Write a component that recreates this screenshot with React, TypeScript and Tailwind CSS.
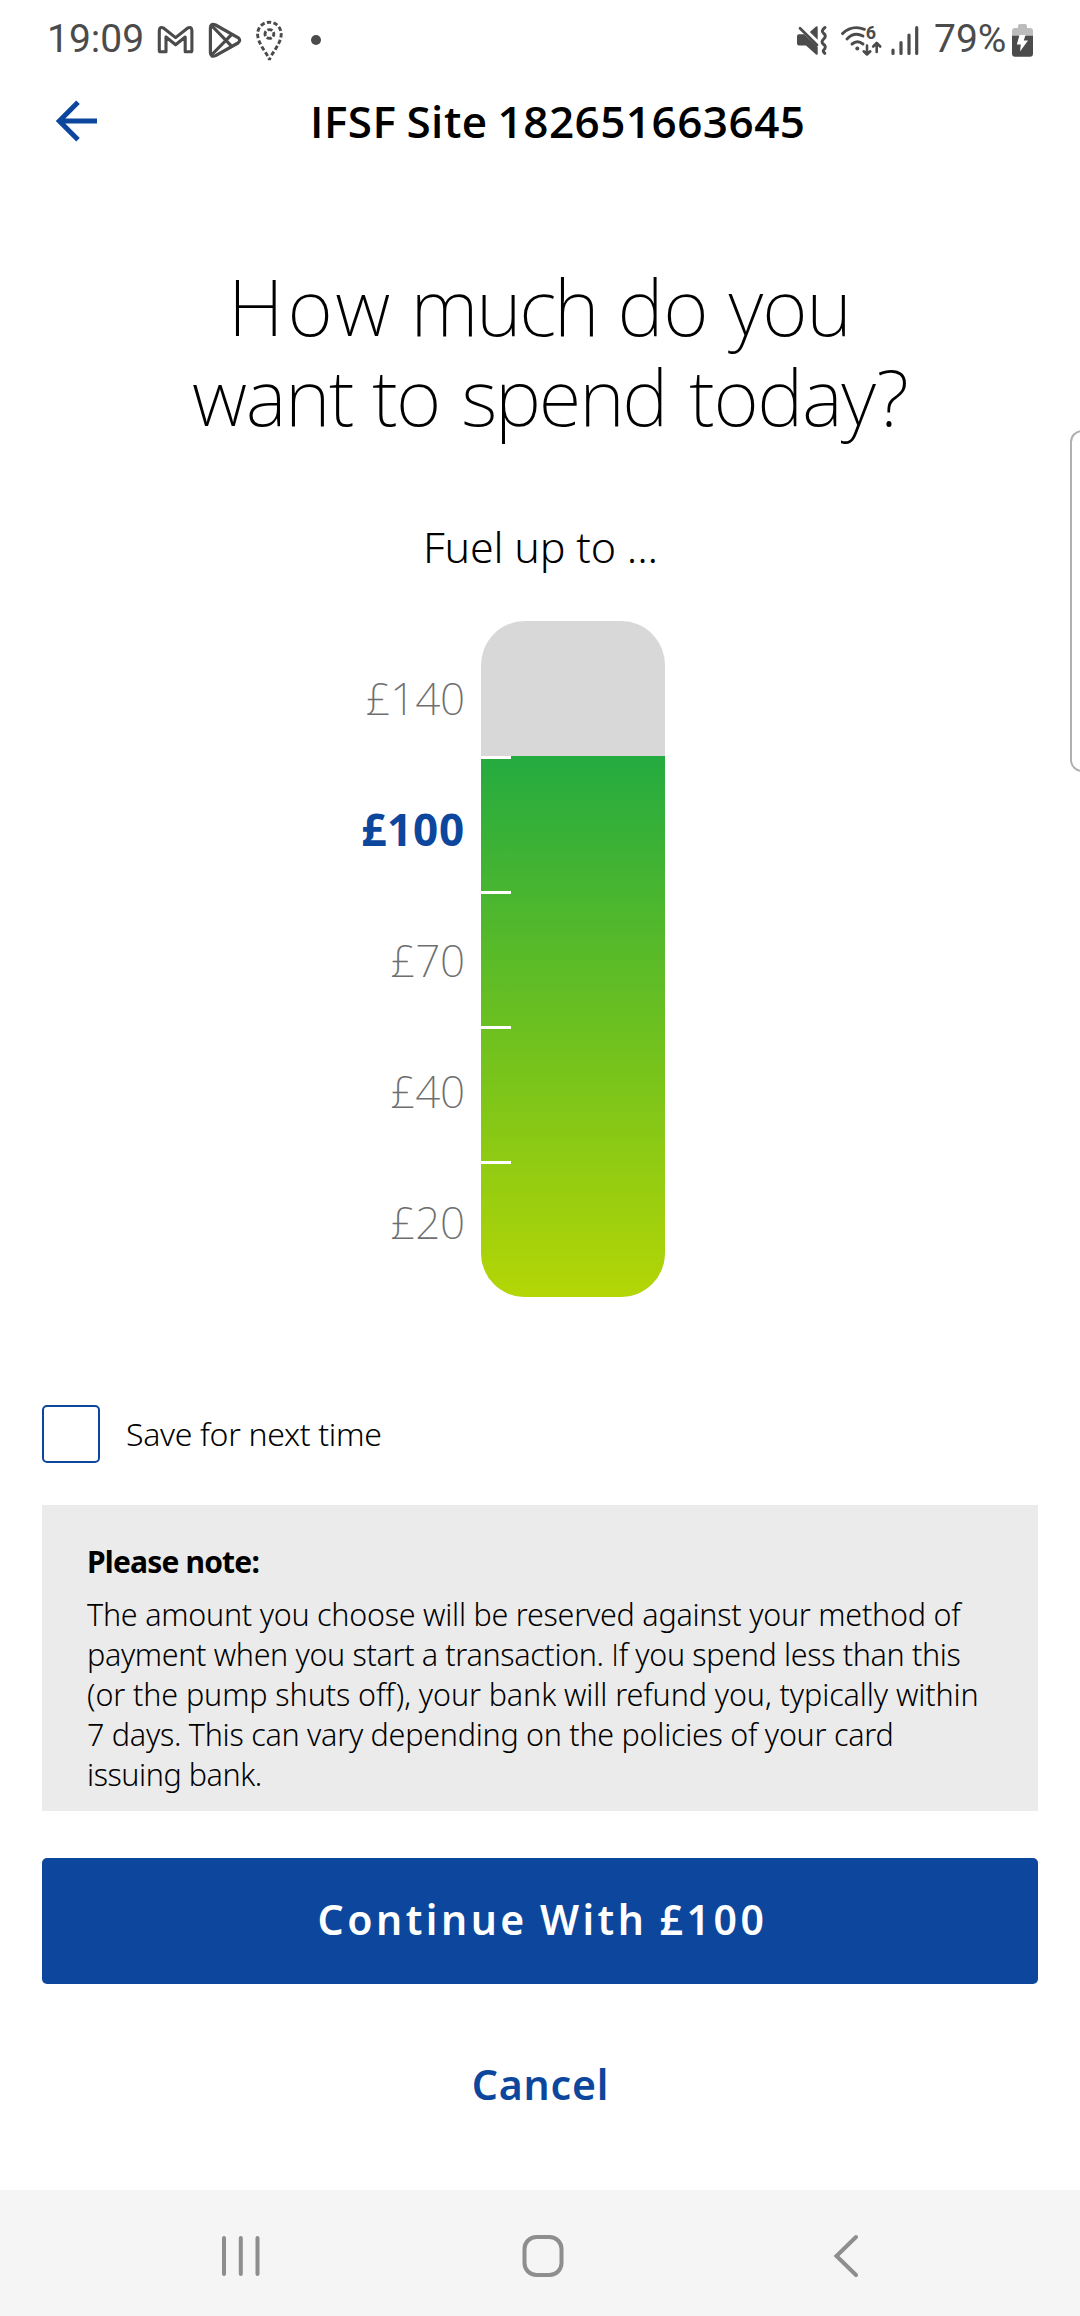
import React from "react";

const INK = "#4b4b4b";

function StatusBar() {
  return (
    <div className="flex h-[78px] shrink-0 items-center justify-between pl-[47px] pr-[44px] pt-px font-['Roboto',sans-serif] text-[39px] leading-none text-[#4b4b4b]">
      <div className="flex items-center">
        <span className="w-[109px]">19:09</span>
        <svg width="40" height="40" viewBox="156 19 40 40" fill="none" stroke={INK} strokeWidth="3.1" strokeLinejoin="round">
          <path d="M160.7 50.8Q159.3 50.8 159.3 49.4V29.6Q159.6 25 163.8 27.2L175.6 36.6L187.4 27.2Q191.6 25 191.9 29.6V49.4Q191.9 50.8 190.5 50.8H185.2V36L175.6 43.8L166 36V50.8Z" />
        </svg>
        <svg className="ml-[10px]" width="40" height="40" viewBox="206 19 40 40" fill="none" stroke={INK} strokeWidth="3.2" strokeLinejoin="round">
          <path d="M215.6 24L238 36.6Q241.4 39.3 238 42L215.6 54.6Q210.5 56.8 210.4 51.5V27Q210.5 21.8 215.6 24Z" />
          <path d="M211.5 24.5L231.8 45.3M211.5 54L231.8 33.3" />
        </svg>
        <svg className="ml-[6px]" width="36" height="44" viewBox="252 17 36 44" fill="none" stroke={INK} strokeWidth="2.9">
          <path d="M269.4 59C268 53 257.6 43 257.6 33A11.8 11.8 0 0 1 281.2 33C281.2 43 270.8 53 269.4 59Z" strokeDasharray="4.4 2.3" strokeDashoffset="2.2" />
          <circle cx="269.4" cy="33" r="4.4" strokeDasharray="5.2 1.71" strokeDashoffset="2.6" />
        </svg>
        <span className="ml-[23px] h-[10px] w-[10px] rounded-full bg-[#4b4b4b]" />
      </div>
      <div className="flex items-center">
        <svg width="34" height="36" viewBox="796 21 34 36" fill={INK}>
          <path d="M799 33.3H804L817.7 46V53Q817.5 54.3 816 53.4L806 44.5H799Q797 44.5 797 42.5V35.3Q797 33.3 799 33.3Z" />
          <path d="M809.8 31L816 25.5Q817.7 24.8 817.7 26.5V38.7Z" />
          <path d="M800 27.3L817 44" stroke={INK} strokeWidth="2.7" strokeLinecap="round" />
          <path d="M825 26.5Q820.5 30 823.5 32.3Q827 35 823.7 38Q820.5 41 823.5 43.3Q827 46 823.7 49Q822.5 50.5 824.8 52.3" fill="none" stroke={INK} strokeWidth="3" strokeLinecap="round" />
        </svg>
        <svg className="ml-[9px]" width="44" height="38" viewBox="839 20 44 38" fill="none" stroke={INK} strokeWidth="2.9" strokeLinecap="round" strokeLinejoin="round">
          <path d="M842.5 32.6Q852 23.5 864.5 28.3M847 38Q854 30.5 863 35M852 43Q857.5 38.7 863 43" />
          <circle cx="857.3" cy="47.5" r="2" fill={INK} stroke="none" />
          <path d="M867 44.5V53M863.7 50.3L867 53.5L870.3 50.3M876.7 51V42.5M873.2 45.5L876.7 42L880.2 45.5" strokeWidth="2.6" />
          <text x="865.8" y="38.3" fill={INK} stroke="none" className="font-['Roboto',sans-serif] text-[18px] font-bold">6</text>
        </svg>
        <svg className="ml-[7px]" width="30" height="34" viewBox="890 22 30 34" stroke={INK} strokeWidth="3.2" strokeLinecap="round">
          <path d="M893 49V52.4M901 41.5V52.4M909 34V52.4M916.7 26.7V52.4" />
        </svg>
        <span className="ml-[14px] w-[75px]">79%</span>
        <svg className="ml-[2px]" width="25" height="36" viewBox="1011 21 25 36">
          <path d="M1018 25Q1018 23 1020 23H1025Q1027 23 1027 25V27H1030Q1033 27 1033 30V35H1012V30Q1012 27 1015 27H1018Z" fill="#bcbcbc" />
          <path d="M1012 34.7H1033V52.5Q1033 55.7 1030 55.7H1015Q1012 55.7 1012 52.5Z" fill={INK} />
          <path d="M1019.5 34H1025.5L1023.8 39.5H1028L1020 50.5L1020.8 43.5H1016.8Z" fill="#fff" />
        </svg>
      </div>
    </div>
  );
}

function Header() {
  return (
    <header className="flex h-[84px] shrink-0 items-center pt-px">
      <button className="flex w-[310px] shrink-0 pl-[54px] pt-px" aria-label="Back">
        <svg width="46" height="44" viewBox="54 100 46 44" fill="none" stroke="#0c479d" strokeWidth="5">
          <path d="M78 103.3L59.3 122L78 140.7M59.3 122H97" />
        </svg>
      </button>
      <h1 className="whitespace-nowrap font-['Open_Sans',sans-serif] text-[44px] font-semibold leading-none tracking-[0.5px] [word-spacing:-2px]">
        IFSF Site 182651663645
      </h1>
    </header>
  );
}

function Amount({ children }: { children: string }) {
  return (
    <li className="flex h-[131px] items-center justify-end text-[44px] font-extralight tracking-[-0.2px] text-[#6e6e6e]">
      {children}
    </li>
  );
}

function Tick() {
  return (
    <div className="h-[135px]">
      <div className="h-[3px] w-[30px] bg-white" />
    </div>
  );
}

function Gauge() {
  return (
    <div className="mt-[44px] flex h-[676px] shrink-0">
      <ul className="flex w-[481px] flex-col pr-[16px] pt-[11px]">
        <Amount>£140</Amount>
        <li className="flex h-[131px] items-center justify-end text-[44px] font-bold tracking-[0.8px] text-[#0c479d]">£100</li>
        <Amount>£70</Amount>
        <Amount>£40</Amount>
        <Amount>£20</Amount>
      </ul>
      <div className="flex w-[184px] flex-col overflow-hidden rounded-[44px] bg-[#d8d8d8] pt-[135px]">
        <div className="h-[541px] bg-[linear-gradient(to_bottom,#24ab40,#6cc020_50%,#b4d605)]">
          <Tick />
          <Tick />
          <Tick />
          <Tick />
        </div>
      </div>
    </div>
  );
}

function Note() {
  return (
    <section className="mx-[42px] mt-[42px] h-[306px] shrink-0 bg-[#ebebeb] pl-[45px] pt-[37px] text-[30.5px] leading-[40px]">
      <h3 className="text-[30px] font-bold tracking-[-0.82px]">Please note:</h3>
      <div className="mt-[12px] whitespace-nowrap font-light">
        <p className="tracking-[-0.25px]">The amount you choose will be reserved against your method of</p>
        <p className="tracking-[-0.35px]">
          payment when you start a transaction. <span className="font-['Open_Sans',sans-serif]">I</span>f you spend less than this
        </p>
        <p className="tracking-[-0.1px]">(or the pump shuts off), your bank will refund you, typically within</p>
        <p className="tracking-[-0.27px]">7 days. This can vary depending on the policies of your card</p>
        <p className="tracking-[-0.45px]">issuing bank.</p>
      </div>
    </section>
  );
}

function NavBar() {
  return (
    <nav className="mt-auto flex h-[126px] shrink-0 items-center bg-[#f5f5f5] pl-[218px] pt-[6px]">
      <svg width="46" height="48" viewBox="218 2232 46 48" stroke="#8e8e8e" strokeWidth="4" strokeLinecap="round">
        <path d="M224 2238V2274M240.8 2238V2274M257.5 2238V2274" />
      </svg>
      <svg className="ml-[256px]" width="46" height="48" viewBox="520 2232 46 48" fill="none" stroke="#8e8e8e" strokeWidth="4">
        <rect x="524.5" y="2237" width="37" height="38" rx="12" />
      </svg>
      <svg className="ml-[266px]" width="32" height="48" viewBox="832 2232 32 48" fill="none" stroke="#8e8e8e" strokeWidth="4" strokeLinecap="round">
        <path d="M856 2237L836.5 2256L856 2275" />
      </svg>
    </nav>
  );
}

export default function App() {
  return (
    <div className="relative flex h-[2316px] w-[1080px] flex-col overflow-hidden bg-white font-['Noto_Sans',sans-serif] text-black">
      <StatusBar />
      <Header />
      <h2 className="mt-[99px] shrink-0 whitespace-nowrap text-[78px] font-extralight leading-[90px]">
        <span className="block pl-[228px] tracking-[-0.19px]">
          <span className="tracking-[4px]">How</span> <span className="-ml-[4px] tracking-[-2.2px]">much</span> <span>do</span>{" "}
          <span className="tracking-[-1px]">you</span>
        </span>
        <span className="block pl-[192px] tracking-[-1.33px]">
          want <span className="tracking-[-2px]">to</span> <span className="ml-[3px] tracking-[-2.2px]">spend</span>{" "}
          <span className="ml-[4px]">today?</span>
        </span>
      </h2>
      <p className="mt-[76px] shrink-0 pl-[423px] text-[43px] font-light leading-[60px] tracking-[-0.2px]">Fuel up to ...</p>
      <Gauge />
      <label className="mt-[108px] flex h-[58px] shrink-0 items-center pl-[42px] text-[32px] font-light tracking-[-0.32px]">
        <span className="h-[58px] w-[58px] rounded-[5px] border-[2.5px] border-[#0c479d]" />
        <span className="ml-[26px]">Save for next time</span>
      </label>
      <Note />
      <button className="mx-[42px] mt-[47px] flex h-[126px] shrink-0 items-center justify-center rounded-[5px] bg-[#0c479d] pb-[2px] pl-[5px] text-[41px] font-semibold tracking-[3.5px] text-white [word-spacing:-2px]">
        Continue With £100
      </button>
      <button className="mt-[70px] h-[60px] shrink-0 pl-[1px] text-[41px] font-semibold leading-[60px] tracking-[0.83px] text-[#0c479d]">
        Cancel
      </button>
      <NavBar />
      <div className="absolute right-[-14px] top-[430px] h-[342px] w-[24px] rounded-[12px] border-2 border-[#b0b0b0]" />
    </div>
  );
}
